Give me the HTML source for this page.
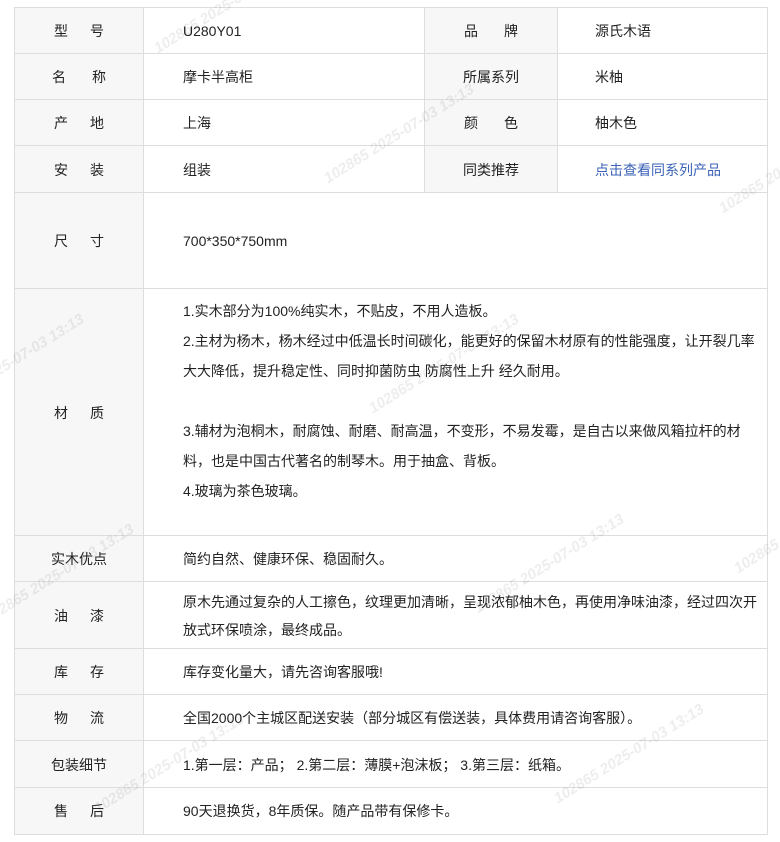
<!DOCTYPE html>
<html><head><meta charset="utf-8">
<style>
html,body{margin:0;padding:0;background:#fff;}
body{width:780px;height:842px;position:relative;overflow:hidden;font-family:"Liberation Sans","Noto Sans CJK SC",sans-serif;font-size:14px;color:#222;}
.r{position:absolute;left:14px;width:752px;border-top:1px solid #ddd;border-left:1px solid #ddd;border-right:1px solid #ddd;}
.l{position:absolute;left:0;top:0;bottom:0;width:128px;background:#f7f7f7;border-right:1px solid #ddd;display:flex;align-items:center;justify-content:center;}
.l2{position:absolute;left:409px;top:0;bottom:0;width:132px;background:#f7f7f7;border-right:1px solid #ddd;border-left:1px solid #ddd;display:flex;align-items:center;justify-content:center;}
.v{position:absolute;left:168px;top:0;bottom:0;display:flex;align-items:center;white-space:nowrap;}
.v2{position:absolute;left:580px;top:0;bottom:0;display:flex;align-items:center;white-space:nowrap;}
.j{display:inline-block;width:50px;text-align:justify;text-align-last:justify;}
.j2{display:inline-block;width:54px;text-align:justify;text-align-last:justify;}
.p{position:absolute;left:168px;top:7px;line-height:30px;white-space:nowrap;}
.wm{position:absolute;color:rgba(0,0,0,0.07);font-style:italic;font-size:15px;transform:rotate(-32deg);transform-origin:left bottom;white-space:nowrap;font-weight:bold;}
</style></head><body>
<div class="r" style="top:7px;height:46px"><div class="l"><span class="j">型号</span></div><div class="v">U280Y01</div><div class="l2"><span class="j2">品牌</span></div><div class="v2">源氏木语</div></div>
<div class="r" style="top:53px;height:46px"><div class="l"><span class="j2">名称</span></div><div class="v">摩卡半高柜</div><div class="l2">所属系列</div><div class="v2">米柚</div></div>
<div class="r" style="top:99px;height:46px"><div class="l"><span class="j">产地</span></div><div class="v">上海</div><div class="l2"><span class="j2">颜色</span></div><div class="v2">柚木色</div></div>
<div class="r" style="top:145px;height:47px"><div class="l"><span class="j">安装</span></div><div class="v">组装</div><div class="l2">同类推荐</div><div class="v2" style="color:#3b62b8">点击查看同系列产品</div></div>
<div class="r" style="top:192px;height:96px"><div class="l"><span class="j">尺寸</span></div><div class="v">700*350*750mm</div></div>
<div class="r" style="top:288px;height:247px"><div class="l"><span class="j">材质</span></div><div class="p">1.实木部分为100%纯实木，不贴皮，不用人造板。<br>2.主材为杨木，杨木经过中低温长时间碳化，能更好的保留木材原有的性能强度，让开裂几率<br>大大降低，提升稳定性、同时抑菌防虫 防腐性上升 经久耐用。<br>&nbsp;<br>3.辅材为泡桐木，耐腐蚀、耐磨、耐高温，不变形，不易发霉，是自古以来做风箱拉杆的材<br>料，也是中国古代著名的制琴木。用于抽盒、背板。<br>4.玻璃为茶色玻璃。</div></div>
<div class="r" style="top:535px;height:46px"><div class="l">实木优点</div><div class="v">简约自然、健康环保、稳固耐久。</div></div>
<div class="r" style="top:581px;height:67px"><div class="l"><span class="j">油漆</span></div><div class="v" style="line-height:28px">原木先通过复杂的人工擦色，纹理更加清晰，呈现浓郁柚木色，再使用净味油漆，经过四次开<br>放式环保喷涂，最终成品。</div></div>
<div class="r" style="top:648px;height:46px"><div class="l"><span class="j">库存</span></div><div class="v">库存变化量大，请先咨询客服哦!</div></div>
<div class="r" style="top:694px;height:46px"><div class="l"><span class="j">物流</span></div><div class="v">全国2000个主城区配送安装（部分城区有偿送装，具体费用请咨询客服）。</div></div>
<div class="r" style="top:740px;height:47px"><div class="l">包装细节</div><div class="v">1.第一层：产品； 2.第二层：薄膜+泡沫板； 3.第三层：纸箱。</div></div>
<div class="r" style="top:787px;height:46px;border-bottom:1px solid #ddd"><div class="l"><span class="j">售后</span></div><div class="v">90天退换货，8年质保。随产品带有保修卡。</div></div>

<div class="wm" style="left:160px;top:40px">102865 2025-07-03 13:13</div>
<div class="wm" style="left:-60px;top:400px">102865 2025-07-03 13:13</div>
<div class="wm" style="left:375px;top:400px">102865 2025-07-03 13:13</div>
<div class="wm" style="left:330px;top:170px">102865 2025-07-03 13:13</div>
<div class="wm" style="left:725px;top:200px">102865 2025-07-03 13:13</div>
<div class="wm" style="left:-10px;top:610px">102865 2025-07-03 13:13</div>
<div class="wm" style="left:480px;top:600px">102865 2025-07-03 13:13</div>
<div class="wm" style="left:100px;top:800px">102865 2025-07-03 13:13</div>
<div class="wm" style="left:560px;top:790px">102865 2025-07-03 13:13</div>
<div class="wm" style="left:740px;top:560px">102865 2025-07-03 13:13</div>
</body></html>
